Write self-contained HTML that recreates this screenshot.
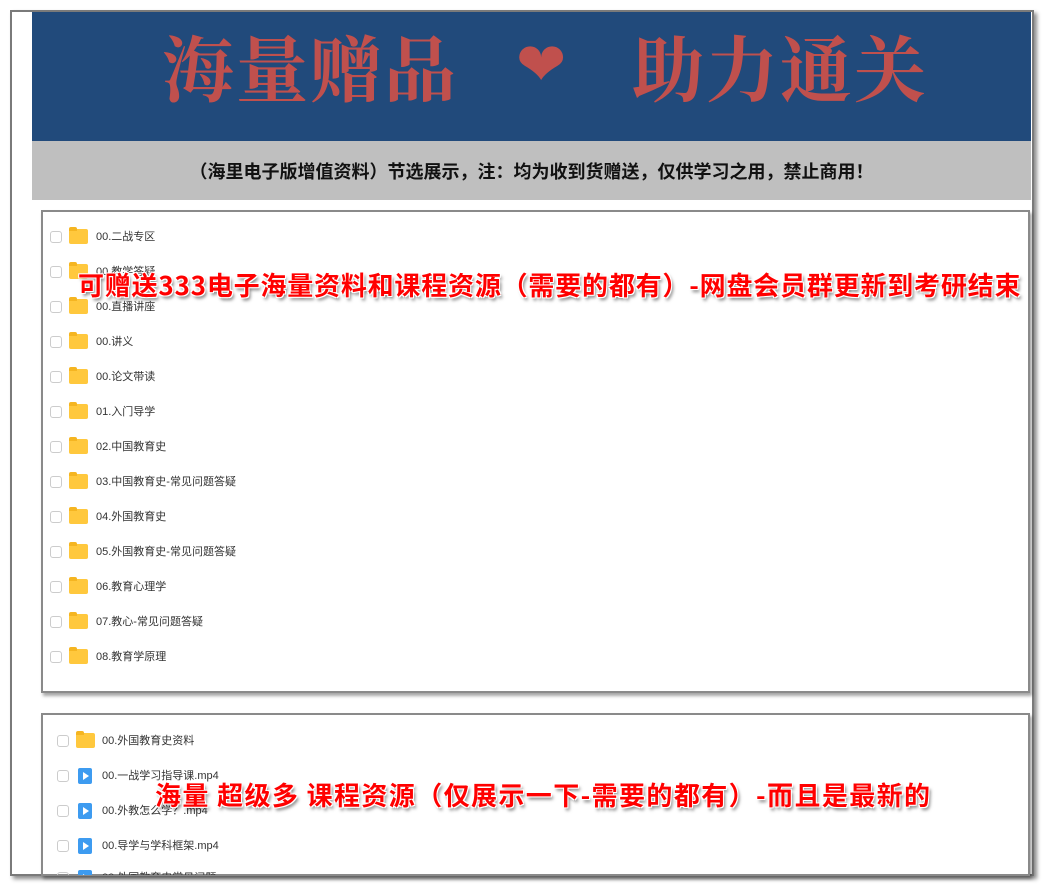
<!DOCTYPE html>
<html><head><meta charset="utf-8"><style>
*{margin:0;padding:0;box-sizing:border-box}
body{width:1044px;height:886px;background:#fff;position:relative;overflow:hidden;font-family:"Liberation Sans","Noto Sans CJK SC",sans-serif}
.frame{position:absolute;left:10px;top:10px;width:1024px;height:866px;border:2px solid #7a7a7a;box-shadow:3px 3px 4px rgba(0,0,0,.45);background:#fff}
.banner{position:absolute;left:32px;top:12px;width:999px;height:129px;background:#214a7b;color:#c0504d;font-family:"Noto Serif CJK SC",serif;font-weight:bold;font-size:72px;line-height:106px;white-space:nowrap}
.gray{position:absolute;left:32px;top:141px;width:999px;height:59px;background:#bfbfbf;text-align:center;font-weight:bold;font-size:18px;line-height:60px;color:#111;font-family:"Noto Sans CJK SC",sans-serif}
.panel{position:absolute;left:41px;width:989px;border:2px solid #8a8a8a;background:#fff;box-shadow:2px 3px 3px rgba(0,0,0,.35);overflow:hidden}
.row{position:absolute;font-size:11px;color:#333;height:16px;line-height:16px;white-space:nowrap}
.cb{position:absolute;width:12px;height:12px;border:1px solid #ccc;border-radius:3px;top:2px}
.fd{position:absolute;width:19px;height:15px;background:#ffc83d;border-radius:2px;top:0}
.fd:before{content:"";position:absolute;left:0;top:-2px;width:8px;height:4px;background:#f5b521;border-radius:2px 2px 0 0}
.vd{position:absolute;width:14px;height:16px;background:#3d9bf0;border-radius:2px;top:0}
.vd:after{content:"";position:absolute;left:5px;top:4px;border-left:6px solid #fff;border-top:4px solid transparent;border-bottom:4px solid transparent}
.ov{position:absolute;color:#f00;font-weight:bold;font-family:"Noto Sans CJK SC",sans-serif;white-space:nowrap;text-shadow:-1px -1px 0 #fff,1px -1px 0 #fff,-1px 1px 0 #fff,1px 1px 0 #fff,2px 3px 3px rgba(0,0,0,.5)}
.clip{position:absolute;left:43px;top:715px;width:985px;height:160px;overflow:hidden}
</style></head><body>
<div class="frame"></div>
<div class="banner"><span style="position:absolute;left:130px;letter-spacing:2px">海量赠品</span><span style="position:absolute;left:484px;font-family:'DejaVu Sans';font-size:60px;font-weight:normal">❤</span><span style="position:absolute;left:600px;letter-spacing:2px">助力通关</span></div>
<div class="gray">（海里电子版增值资料）节选展示，注：均为收到货赠送，仅供学习之用，禁止商用！</div>

<div class="panel" style="top:210px;height:483px"></div>
<div class="row" style="left:50px;top:229px"><span class="cb"></span><span class="fd" style="left:19px"></span><span style="margin-left:46px">00.二战专区</span></div>
<div class="row" style="left:50px;top:264px"><span class="cb"></span><span class="fd" style="left:19px"></span><span style="margin-left:46px">00.教学答疑</span></div>
<div class="row" style="left:50px;top:299px"><span class="cb"></span><span class="fd" style="left:19px"></span><span style="margin-left:46px">00.直播讲座</span></div>
<div class="row" style="left:50px;top:334px"><span class="cb"></span><span class="fd" style="left:19px"></span><span style="margin-left:46px">00.讲义</span></div>
<div class="row" style="left:50px;top:369px"><span class="cb"></span><span class="fd" style="left:19px"></span><span style="margin-left:46px">00.论文带读</span></div>
<div class="row" style="left:50px;top:404px"><span class="cb"></span><span class="fd" style="left:19px"></span><span style="margin-left:46px">01.入门导学</span></div>
<div class="row" style="left:50px;top:439px"><span class="cb"></span><span class="fd" style="left:19px"></span><span style="margin-left:46px">02.中国教育史</span></div>
<div class="row" style="left:50px;top:474px"><span class="cb"></span><span class="fd" style="left:19px"></span><span style="margin-left:46px">03.中国教育史-常见问题答疑</span></div>
<div class="row" style="left:50px;top:509px"><span class="cb"></span><span class="fd" style="left:19px"></span><span style="margin-left:46px">04.外国教育史</span></div>
<div class="row" style="left:50px;top:544px"><span class="cb"></span><span class="fd" style="left:19px"></span><span style="margin-left:46px">05.外国教育史-常见问题答疑</span></div>
<div class="row" style="left:50px;top:579px"><span class="cb"></span><span class="fd" style="left:19px"></span><span style="margin-left:46px">06.教育心理学</span></div>
<div class="row" style="left:50px;top:614px"><span class="cb"></span><span class="fd" style="left:19px"></span><span style="margin-left:46px">07.教心-常见问题答疑</span></div>
<div class="row" style="left:50px;top:649px"><span class="cb"></span><span class="fd" style="left:19px"></span><span style="margin-left:46px">08.教育学原理</span></div>
<div class="ov" style="left:78px;top:266px;font-size:26px;letter-spacing:0.8px">可赠送333电子海量资料和课程资源（需要的都有）-网盘会员群更新到考研结束</div>

<div class="panel" style="top:713px;height:163px"></div>
<div class="clip">
<div class="row" style="left:14px;top:18px"><span class="cb"></span><span class="fd" style="left:19px"></span><span style="margin-left:45px">00.外国教育史资料</span></div>
<div class="row" style="left:14px;top:53px"><span class="cb"></span><span class="vd" style="left:21px"></span><span style="margin-left:45px">00.一战学习指导课.mp4</span></div>
<div class="row" style="left:14px;top:88px"><span class="cb"></span><span class="vd" style="left:21px"></span><span style="margin-left:45px">00.外教怎么学？.mp4</span></div>
<div class="row" style="left:14px;top:123px"><span class="cb"></span><span class="vd" style="left:21px"></span><span style="margin-left:45px">00.导学与学科框架.mp4</span></div>
<div class="row" style="left:14px;top:155px"><span class="cb"></span><span class="vd" style="left:21px"></span><span style="margin-left:45px">00.外国教育史常见问题</span></div>
</div>
<div class="ov" style="left:155px;top:776px;font-size:26px;letter-spacing:1.4px">海量 超级多 课程资源（仅展示一下-需要的都有）-而且是最新的</div>
</body></html>
